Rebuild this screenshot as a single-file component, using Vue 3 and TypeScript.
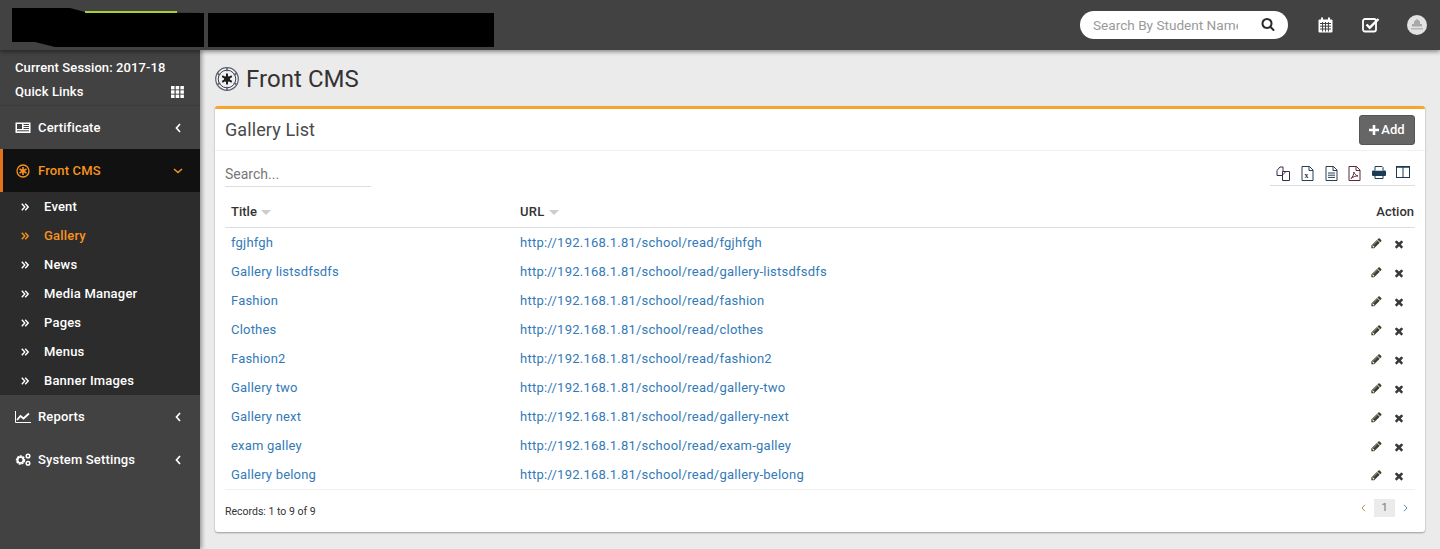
<script setup lang="ts">
const sub = ['Event', 'Gallery', 'News', 'Media Manager', 'Pages', 'Menus', 'Banner Images']
const rows = [
  ['fgjhfgh', 'fgjhfgh'],
  ['Gallery listsdfsdfs', 'gallery-listsdfsdfs'],
  ['Fashion', 'fashion'],
  ['Clothes', 'clothes'],
  ['Fashion2', 'fashion2'],
  ['Gallery two', 'gallery-two'],
  ['Gallery next', 'gallery-next'],
  ['exam galley', 'exam-galley'],
  ['Gallery belong', 'gallery-belong'],
]
const pencil = 'M363 1408l91-91-235-235-91 91v107h128v128h107zm523-928q0-22-22-22-10 0-17 7l-542 542q-7 7-7 17 0 22 22 22 10 0 17-7l542-542q7-7 7-17zm-54-192l416 416-832 832h-416v-416zm683 96q0 53-37 90l-166 166-416-416 166-165q36-38 90-38 53 0 91 38l235 234q37 39 37 91z'
const times = 'M1298 1322q0 40-28 68l-136 136q-28 28-68 28t-68-28l-294-294-294 294q-28 28-68 28t-68-28l-136-136q-28-28-28-68t28-68l294-294-294-294q-28-28-28-68t28-68l136-136q28-28 68-28t68 28l294 294 294-294q28-28 68-28t68 28l136 136q28 28 28 68t-28 68l-294 294 294 294q28 28 28 68z'
const search = 'M1152 704q0-185-131.5-316.5t-316.5-131.5-316.5 131.5-131.5 316.5 131.5 316.5 316.5 131.5 316.5-131.5 131.5-316.5zm512 832q0 52-38 90t-90 38q-54 0-90-38l-343-342q-179 124-399 124-143 0-273.5-55.5t-225-150-150-225-55.5-273.5 55.5-273.5 150-225 225-150 273.5-55.5 273.5 55.5 225 150 150 225 55.5 273.5q0 220-124 399l343 343q37 37 37 90z'
</script>

<template>
  <div class="page">
    <header class="topbar">
      <svg class="logo" width="204" height="50" viewBox="0 0 204 50">
        <polygon points="12,8 70,8 85,12 204,13 204,47 55,47 35,42 12,42" fill="#000" />
        <rect x="85" y="11" width="92" height="2" fill="#a4d233" />
      </svg>
      <div class="logo-two"></div>
      <div class="top-right">
        <div class="searchbox">
          <span class="placeholder">Search By Student Name</span>
          <svg width="14" height="14" viewBox="0 0 1664 1792"><path :d="search" fill="#2b2b2b" /></svg>
        </div>
        <svg class="ticon first" width="15" height="16" viewBox="0 0 15 16">
          <rect x="0.5" y="2.5" width="14" height="13" rx="1" fill="#fff" />
          <rect x="3" y="0.5" width="2" height="3.5" fill="#fff" /><rect x="10" y="0.5" width="2" height="3.5" fill="#fff" />
          <path d="M2 6.5h11M2 9.2h11M2 12h11M4.6 5v9.500M7.500 5v9.500M10.400 5v9.500" stroke="#424242" stroke-width="1" />
        </svg>
        <svg class="ticon second" width="18" height="16" viewBox="0 0 18 16">
          <rect x="1" y="2" width="13" height="12.500" rx="2" fill="none" stroke="#fff" stroke-width="1.800" />
          <path d="M4.500 7.500l3.200 3.200L16.500 2" fill="none" stroke="#fff" stroke-width="2.400" />
        </svg>
        <svg class="avatar" width="20" height="20" viewBox="0 0 20 20">
          <circle cx="10" cy="10" r="10" fill="#e2e2e2" />
          <path d="M10 4l3 2.500v2.500h2v2.500H5V9h2V6.500z" fill="#a8a8a8" />
          <rect x="4" y="13" width="12" height="1.500" fill="#b5b5b5" />
        </svg>
      </div>
    </header>

    <div class="body">
      <aside class="sidebar">
        <div class="session">
          <div>Current Session: 2017-18</div>
          <div class="quick">
            <span>Quick Links</span>
            <svg width="13" height="12" viewBox="0 0 13 12" fill="#fff">
              <rect x="0" y="0" width="3.500" height="3.400" /><rect x="4.700" y="0" width="3.500" height="3.400" /><rect x="9.400" y="0" width="3.500" height="3.400" />
              <rect x="0" y="4.300" width="3.500" height="3.400" /><rect x="4.700" y="4.300" width="3.500" height="3.400" /><rect x="9.400" y="4.300" width="3.500" height="3.400" />
              <rect x="0" y="8.600" width="3.500" height="3.400" /><rect x="4.700" y="8.600" width="3.500" height="3.400" /><rect x="9.400" y="8.600" width="3.500" height="3.400" />
            </svg>
          </div>
        </div>

        <div class="item">
          <svg class="micon" width="16" height="12" viewBox="0 0 16 12">
            <rect x="0.500" y="0.500" width="15" height="10.500" fill="#fff" />
            <rect x="2" y="2" width="5" height="5" fill="#424242" />
            <path d="M8.500 2.500h5.500M8.500 4.500h5.500M8.500 6.500h5.500M2 8.800h12" stroke="#424242" stroke-width="1" />
          </svg>
          <span class="label">Certificate</span>
          <svg class="chev" width="6" height="10" viewBox="0 0 6 10"><path d="M5 1L1.500 5 5 9" fill="none" stroke="#fff" stroke-width="1.700" /></svg>
        </div>

        <div class="item active">
          <svg class="micon" width="14" height="14" viewBox="0 0 14 14">
            <circle cx="7" cy="7" r="6" fill="none" stroke="#f7931e" stroke-width="1.300" />
            <path d="M7 3v8M3.500 5l7 4M10.500 5l-7 4" stroke="#f7931e" stroke-width="1.600" />
          </svg>
          <span class="label">Front CMS</span>
          <svg class="chev down" width="10" height="6" viewBox="0 0 10 6"><path d="M1 1l4 3.500L9 1" fill="none" stroke="#f7931e" stroke-width="1.500" /></svg>
        </div>

        <ul class="submenu">
          <li v-for="s in sub" :key="s" :class="{ current: s === 'Gallery' }">
            <svg width="8" height="8" viewBox="0 0 8 8"><path d="M0.800 0.800L3.800 4 0.800 7.200M4.200 0.800L7.200 4 4.200 7.200" fill="none" stroke="currentColor" stroke-width="1.400" /></svg>
            <span>{{ s }}</span>
          </li>
        </ul>

        <div class="item">
          <svg class="micon" width="16" height="12" viewBox="0 0 16 12">
            <path d="M0.500 0v11.500H16" fill="none" stroke="#fff" stroke-width="1" />
            <path d="M2 9l3.500-4 3 2.500L14 2.500" fill="none" stroke="#fff" stroke-width="1.800" />
          </svg>
          <span class="label">Reports</span>
          <svg class="chev" width="6" height="10" viewBox="0 0 6 10"><path d="M5 1L1.500 5 5 9" fill="none" stroke="#fff" stroke-width="1.700" /></svg>
        </div>

        <div class="item">
          <svg class="micon" width="16" height="13" viewBox="0 0 16 13">
            <circle cx="5.500" cy="7" r="3.400" fill="none" stroke="#fff" stroke-width="2.600" stroke-dasharray="1.800 0.700" />
            <circle cx="5.500" cy="7" r="3" fill="none" stroke="#fff" stroke-width="1.600" />
            <circle cx="13" cy="3" r="1.800" fill="none" stroke="#fff" stroke-width="1.500" />
            <circle cx="13" cy="10.200" r="1.800" fill="none" stroke="#fff" stroke-width="1.500" />
          </svg>
          <span class="label">System Settings</span>
          <svg class="chev" width="6" height="10" viewBox="0 0 6 10"><path d="M5 1L1.500 5 5 9" fill="none" stroke="#fff" stroke-width="1.700" /></svg>
        </div>
      </aside>

      <main class="content">
        <div class="heading">
          <svg width="24" height="24" viewBox="0 0 24 24">
            <circle cx="12" cy="12" r="11.300" fill="#f2f2f2" stroke="#5a6070" stroke-width="1.200" />
            <circle cx="12" cy="12" r="8.800" fill="none" stroke="#3a3f4a" stroke-width="1" />
            <path d="M12 1v3.200M12 19.800V23M2.500 6.500l2.800 1.600M18.700 15.900l2.800 1.600M21.500 6.500l-2.800 1.600M5.300 15.900l-2.800 1.600" stroke="#5a6070" stroke-width="1.600" />
            <path d="M12 6.500v11M7.200 9.200l9.600 5.600M16.800 9.200l-9.600 5.600" stroke="#1f1f1f" stroke-width="2" />
            <circle cx="12" cy="12" r="3" fill="#1f1f1f" />
          </svg>
          <h1>Front CMS</h1>
        </div>

        <section class="card">
          <div class="card-head">
            <h3>Gallery List</h3>
            <button class="add" type="button">
              <svg width="10" height="10" viewBox="0 0 10 10"><path d="M5 0v10M0 5h10" stroke="#fff" stroke-width="2.600" /></svg>
              <span>Add</span>
            </button>
          </div>

          <div class="card-body">
            <div class="tools">
              <div class="filter">Search...</div>
              <div class="exports">
                <svg width="15" height="15" viewBox="0 0 15 15" fill="#fff" stroke="#3c2a4a"><path d="M1 4.500L4 1h3v8.500H1z" /><path d="M6.500 5.500h7v9h-7z" /><path d="M6.500 9L10 5.500" /></svg>
                <svg width="13" height="15" viewBox="0 0 13 15" fill="none" stroke="#2a3f52"><path d="M1 .5h7.500l3.500 3.500v10.500H1z" /><path d="M8 .5V4.500h4" /><text x="3.500" y="12" font-size="8" font-family="Liberation Serif" font-weight="700" fill="#333" stroke="none">x</text></svg>
                <svg width="13" height="15" viewBox="0 0 13 15" fill="none" stroke="#2a3f52"><path d="M1 .5h7.500l3.500 3.500v10.500H1z" /><path d="M8 .5V4.500h4M3 7h7M3 9.200h7M3 11.400h7" /></svg>
                <svg width="13" height="15" viewBox="0 0 13 15" fill="none" stroke="#5a2a3a"><path d="M1 .5h7.500l3.500 3.500v10.500H1z" /><path d="M8 .5V4.500h4M3 12.500c2-1.500 3-5 2.800-6.500.8 2 2.500 3.800 4.200 4-2-.2-4.500.5-7 2.500z" /></svg>
                <svg width="14" height="13" viewBox="0 0 14 13"><rect x="0" y="4.500" width="14" height="5.500" rx="1" fill="#1d3b55" /><path d="M3 4.500V.5h7l1 1v3M3 10v2.500h8V10" fill="#fff" stroke="#1d3b55" /></svg>
                <svg width="14" height="12" viewBox="0 0 14 12" fill="none" stroke="#1d3b55"><rect x=".5" y=".5" width="13" height="11" /><path d="M7 .5v11" /><path d="M.5 1h13" stroke-width="1.500" /></svg>
              </div>
            </div>

            <div class="table">
              <div class="row thead">
                <div class="c1">Title <i class="sort"></i></div>
                <div class="c2">URL <i class="sort"></i></div>
                <div class="c3">Action</div>
              </div>
              <div v-for="r in rows" :key="r[0]" class="row">
                <div class="c1"><span class="link">{{ r[0] }}</span></div>
                <div class="c2"><span class="link">http://192.168.1.81/school/read/{{ r[1] }}</span></div>
                <div class="c3 acts">
                  <svg width="11" height="12" viewBox="0 0 1536 1792"><path :d="pencil" fill="#3b3f2c" /></svg>
                  <svg width="10" height="12" viewBox="0 0 1408 1792"><path :d="times" fill="#3a3a3a" /></svg>
                </div>
              </div>
            </div>

            <div class="foot">
              <span>Records: 1 to 9 of 9</span>
              <div class="pager">
                <svg width="5" height="8" viewBox="0 0 5 8"><path d="M4 .8L1 4l3 3.200" fill="none" stroke="#a98a6a" stroke-width="1" /></svg>
                <span class="num">1</span>
                <svg width="5" height="8" viewBox="0 0 5 8"><path d="M1 .8L4 4 1 7.200" fill="none" stroke="#6a8aa9" stroke-width="1" /></svg>
              </div>
            </div>
          </div>
        </section>
      </main>
    </div>
  </div>
</template>

<style>
html, body { margin: 0; padding: 0; overflow: hidden; }
</style>

<style scoped>
.page { width: 1440px; height: 549px; display: flex; flex-direction: column; font-family: Roboto, "Liberation Sans", sans-serif; background: #ebebeb; overflow: hidden; }
.topbar { height: 50px; flex: none; background: #424242; display: flex; align-items: flex-start; box-shadow: 0 2px 4px rgba(0,0,0,.4); position: relative; z-index: 3; }
.logo { display: block; flex: none; }
.logo-two { width: 286px; height: 34px; margin: 13px 0 0 4px; background: #000; }
.top-right { margin-left: auto; display: flex; align-items: center; height: 50px; }
.searchbox { width: 208px; height: 28px; background: #fff; border-radius: 14px; display: flex; align-items: center; justify-content: space-between; box-sizing: border-box; padding: 0 13px; }
.placeholder { font-size: 13.6px; color: #9a9a9a; width: 145px; overflow: hidden; white-space: nowrap; }
.ticon.first { margin-left: 30px; }
.ticon.second { margin-left: 29px; }
.avatar { margin: 0 13px 0 27px; }

.body { flex: 1; display: flex; min-height: 0; }
.sidebar { width: 200px; flex: none; background: #424242; color: #fff; box-shadow: 2px 0 4px rgba(0,0,0,.35); position: relative; z-index: 2; font-size: 13px; font-weight: 500; letter-spacing: .15px; }
.session { height: 56px; box-sizing: border-box; padding: 10px 16px 0 15px; line-height: 15px; letter-spacing: .1px; border-bottom: 1px solid #3b3b3b; }
.quick { display: flex; justify-content: space-between; align-items: center; margin-top: 9px; }
.item { height: 43px; display: flex; align-items: center; box-sizing: border-box; padding: 0 19px 0 15px; }
.micon { width: 16px; flex: none; }
.label { margin-left: 7px; flex: 1; }
.chev { flex: none; }
.item.active { background: #111; color: #f7931e; border-left: 3px solid #e0731c; padding-left: 12px; }
.chev.down { margin-right: -2px; }
.submenu { list-style: none; margin: 0; padding: 0; background: #2c2c2c; letter-spacing: .2px; }
.submenu li { height: 29px; display: flex; align-items: center; padding-left: 21px; }
.submenu li span { margin-left: 15px; }
.submenu li.current { color: #f7931e; }

.content { flex: 1; padding: 0 15px; min-width: 0; }
.heading { height: 56px; display: flex; align-items: center; gap: 7px; color: #333; padding-top: 1px; box-sizing: border-box; }
h1 { margin: 0; font-size: 24px; font-weight: 400; color: #333; letter-spacing: .05px; }
.card { height: 426px; box-sizing: border-box; background: #fff; border-top: 3px solid #f9a32e; border-radius: 3px; box-shadow: 0 1px 2px rgba(0,0,0,.35); }
.card-head { height: 42px; box-sizing: border-box; display: flex; align-items: center; justify-content: space-between; padding: 0 10px; border-bottom: 1px solid #f0f0f0; }
h3 { margin: 0; font-size: 18px; font-weight: 400; color: #4a4a4a; letter-spacing: .1px; }
.add { width: 56px; height: 30px; padding: 0; display: flex; align-items: center; justify-content: center; gap: 2px; background: #666; border: 1px solid #555; border-radius: 3px; color: #fff; font: 500 13px Roboto, sans-serif; }
.card-body { padding: 0 10px; }
.tools { height: 36px; display: flex; justify-content: space-between; align-items: flex-start; }
.filter { width: 146px; height: 36px; box-sizing: border-box; border-bottom: 1px solid #ddd; font-size: 14px; color: #777; line-height: 16px; padding-top: 15px; }
.exports { width: 145px; height: 35px; box-sizing: border-box; padding: 15px 5px 0 6px; border-bottom: 1px solid #ddd; display: flex; justify-content: space-between; align-items: flex-start; }
.table { margin-top: 11px; font-size: 13px; }
.row { height: 29px; display: flex; align-items: center; padding: 0 1px 0 6px; letter-spacing: .2px; }
.thead { height: 27px; padding-bottom: 2px; border-bottom: 1px solid #ddd; font-weight: 500; color: #333; letter-spacing: 0; }
.c1 { width: 289px; flex: none; }
.c2 { flex: 1; letter-spacing: .24px; }
.c3 { width: 80px; text-align: right; }
.link { color: #337ab7; }
.sort { display: inline-block; width: 0; height: 0; border: 5px solid transparent; border-top: 5px solid #ccc; border-bottom: 0; margin-left: 1px; vertical-align: 1px; }
.acts { display: flex; justify-content: flex-end; gap: 12px; padding-right: 10px; box-sizing: border-box; padding-top: 3px; }
.foot { height: 42px; border-top: 1px solid #f0f0f0; display: flex; justify-content: space-between; align-items: center; font-size: 10.5px; color: #333; }
.pager { display: flex; align-items: center; gap: 8px; margin-right: 7px; margin-top: -6px; }
.num { width: 21px; height: 18px; background: #ebebeb; color: #777; text-align: center; line-height: 18px; font-size: 11px; }
</style>
